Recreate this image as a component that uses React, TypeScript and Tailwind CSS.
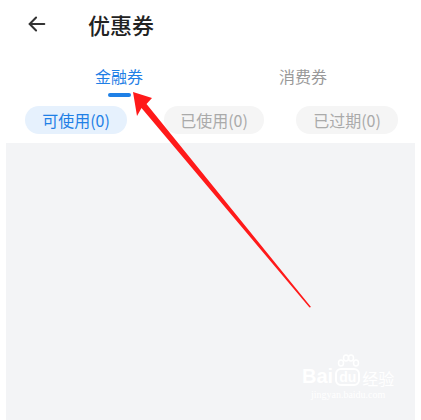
import React from "react";

export default function App() {
  const font = { fontFamily: '"Noto Sans CJK SC", "Noto Sans", sans-serif' };
  return (
    <div className="relative w-[421px] h-[420px] bg-white overflow-hidden" style={font}>
      {/* Header */}
      <div className="flex items-center h-[48px] pl-[26px]">
        <svg width="22" height="22" viewBox="0 0 24 24" fill="none" stroke="#333" strokeWidth="2.2" strokeLinecap="round" strokeLinejoin="round">
          <path d="M20 12H4" />
          <path d="M11 5l-7 7 7 7" />
        </svg>
        <div className="ml-[40px] text-[22px] leading-none text-[#222] font-medium">优惠券</div>
      </div>
      {/* Tabs */}
      <div className="flex h-[52px]">
        <div className="w-[238px] flex flex-col items-center pt-[18px]">
          <div className="text-[16px] leading-[20px] text-[#1f80e6]">金融券</div>
          <div className="mt-[7px] w-[23px] h-[4px] rounded-full bg-[#1f80e6]" />
        </div>
        <div className="w-[130px] flex flex-col items-center pt-[18px]">
          <div className="text-[16px] leading-[20px] text-[#999]">消费券</div>
        </div>
      </div>
      {/* Chips */}
      <div className="flex items-center pl-[25px] h-[28px] mt-[6px]">
        <div className="w-[102px] h-[28px] rounded-full bg-[#e6f1fd] flex items-center justify-center text-[16px] text-[#1f80e6]">可使用(0)</div>
        <div className="ml-[37px] w-[100px] h-[28px] rounded-full bg-[#f5f5f5] flex items-center justify-center text-[16px] text-[#aaa]">已使用(0)</div>
        <div className="ml-[32px] w-[102px] h-[28px] rounded-full bg-[#f5f5f5] flex items-center justify-center text-[16px] text-[#aaa]">已过期(0)</div>
      </div>
      {/* Content area */}
      <div className="mx-[6px] mt-[9px] h-[300px] bg-[#f3f4f6]" />

      {/* Red arrow annotation */}
      <svg className="absolute left-0 top-0" width="421" height="420" viewBox="0 0 421 420">
        <polygon points="133,92 152,98 146.5,104 311,307 309.5,307.5 141.5,108 137,116" fill="#ff1a1a" />
      </svg>

      {/* Watermark */}
      <div className="absolute left-[302px] top-[366px] flex flex-col items-center text-white">
        <div className="flex items-end">
          <span className="text-[20px] font-bold leading-none" style={{ fontFamily: '"Liberation Sans", sans-serif' }}>Bai</span>
          <div className="relative mx-[2px]">
            <svg className="absolute left-[1px] top-[-14px]" width="24" height="14" viewBox="0 0 24 14" fill="none" stroke="white" strokeWidth="1.5">
              <ellipse cx="5" cy="9" rx="2.5" ry="3" />
              <ellipse cx="10" cy="4" rx="2.5" ry="3" />
              <ellipse cx="15" cy="4" rx="2.5" ry="3" />
              <ellipse cx="20" cy="9" rx="2.5" ry="3" />
            </svg>
            <span className="block text-[14px] font-bold leading-none rounded-[6px] border-2 border-white px-[2px]" style={{ fontFamily: '"Liberation Sans", sans-serif' }}>du</span>
          </div>
          <span className="text-[16px] leading-none">经验</span>
        </div>
        <div className="text-[10px] leading-none mt-[4px]" style={{ fontFamily: '"Liberation Serif", serif' }}>jingyan.baidu.com</div>
      </div>
    </div>
  );
}
